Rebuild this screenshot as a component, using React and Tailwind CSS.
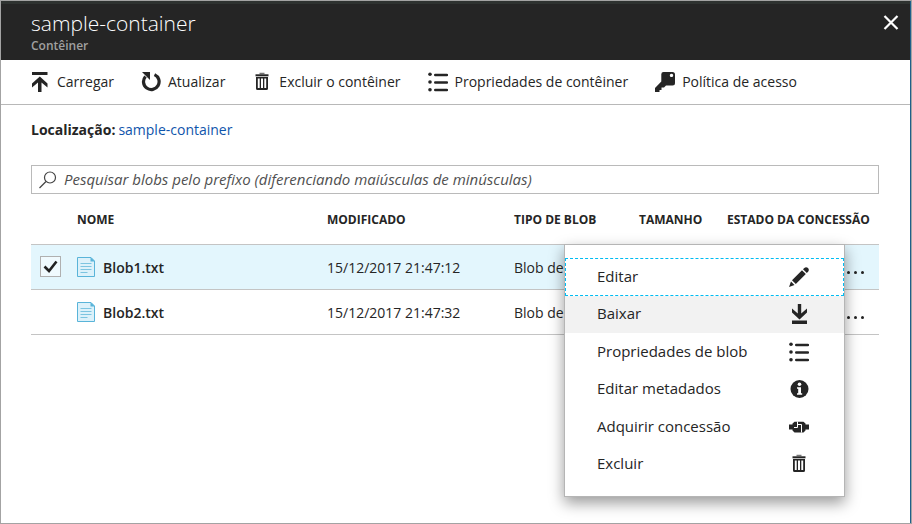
import React from "react";

function UploadIcon() {
  return (
    <svg width="20" height="20" viewBox="0 0 20 20" fill="currentColor" aria-hidden="true">
      <path d="M2 0h15.500v3H2z" />
      <path d="M9.800 4.500 17.500 11.500v4L11.500 10.500V20H8V10.500L2 15.500v-4z" />
    </svg>
  );
}

function DownloadIcon() {
  return (
    <svg width="20" height="20" viewBox="0 0 20 20" fill="currentColor" aria-hidden="true">
      <path d="M3 16.500h15v3.500H3z" />
      <path d="M10.500 15.500 18 8.500V4.500L12.200 9.500V0H8.800V9.500L3 4.500v4z" />
    </svg>
  );
}

function RefreshIcon() {
  return (
    <svg width="20" height="20" viewBox="0 0 20 20" fill="none" aria-hidden="true">
      <path d="M13.500 2.600A7.800 7.800 0 1 1 4.500 4.500" stroke="currentColor" strokeWidth="3.200" />
      <path d="M1 0H9v8z" fill="currentColor" />
    </svg>
  );
}

function TrashIcon() {
  return (
    <svg width="20" height="20" viewBox="0 0 20 20" fill="none" aria-hidden="true">
      <path d="M7.500 1.500h5" stroke="#777" strokeWidth="1.500" />
      <path d="M3.500 3.300h13" stroke="currentColor" strokeWidth="2" />
      <path
        fill="currentColor"
        fillRule="evenodd"
        d="M4 5h12V16.500q0 1.500-1.500 1.500h-9Q4 18 4 16.500zM5.800 6.500v9.500h1.900V6.500zm3.200 0v9.500h2V6.500zm3.300 0v9.500h1.900V6.500z"
      />
    </svg>
  );
}

function ListIcon() {
  return (
    <svg width="20" height="20" viewBox="0 0 20 20" aria-hidden="true">
      <g fill="currentColor">
        <circle cx="2" cy="2.300" r="1.800" />
        <circle cx="2" cy="10" r="1.800" />
        <circle cx="2" cy="17.700" r="1.800" />
      </g>
      <path d="M7.200 3H19M7.200 10.500H19M7.200 18H19" stroke="currentColor" strokeWidth="2.400" strokeLinecap="round" />
    </svg>
  );
}

function KeyIcon() {
  return (
    <svg width="20" height="20" viewBox="0 0 20 20" fill="currentColor" aria-hidden="true">
      <path
        fillRule="evenodd"
        d="M8.500 0H17.500Q20 0 20 2.500V11Q20 13.500 17.500 13.500H11L9 15.500H6.500V18H4.500V20H0V16L6.300 9.500V2.200Q6.300 0 8.500 0zM16.500 1.700a1.700 1.700 0 1 0 .01 0z"
      />
    </svg>
  );
}

function PencilIcon() {
  return (
    <svg width="20" height="20" viewBox="0 0 20 20" fill="currentColor" aria-hidden="true">
      <path d="M0 20 2 14.500 5.500 18z" />
      <path d="M3 13.200 13 3.200 16.800 7 6.800 17z" />
      <path d="M14 2.200 15.300.9Q17.200-.6 19 1.100 20.600 2.900 19.100 4.700L17.800 6z" />
    </svg>
  );
}

function InfoIcon() {
  return (
    <svg width="20" height="20" viewBox="0 0 20 20" aria-hidden="true">
      <circle cx="10.500" cy="10" r="9" fill="currentColor" />
      <circle cx="10.500" cy="5.200" r="1.800" fill="#fff" />
      <path d="M8 8.200h4v6h1.200v1.500H8v-1.500h1.200v-4.500H8z" fill="#fff" />
    </svg>
  );
}

function LeaseIcon() {
  return (
    <svg width="20" height="20" viewBox="0 0 20 20" aria-hidden="true">
      <path d="M0 7.500h3.500V6.500L5.500 4.800h9l2 1.700v1H20v5h-3.500v1L14.500 15.500h-9l-2-2v-1H0z" fill="currentColor" />
      <path d="M8.500 4.500V10.500H5M8.500 7.500H12.500V12.500M12.500 10.500V15.500" fill="none" stroke="#fff" strokeWidth="1" />
    </svg>
  );
}

function FileIcon() {
  return (
    <svg width="18" height="20" viewBox="0 0 18 20" aria-hidden="true">
      <path d="M.5.500H14L17.500 4V19.500H.5z" fill="#dcf1fa" stroke="#59b4d9" />
      <path d="M13.500 0 18 4.500H13.500z" fill="#59b4d9" />
      <path d="M3.500 6.500h11M3.500 9.500h11M3.500 12.500h11M3.500 15.500h7" stroke="#7cc4e0" />
    </svg>
  );
}

const commands = [
  { label: "Carregar", Icon: UploadIcon },
  { label: "Atualizar", Icon: RefreshIcon },
  { label: "Excluir o contêiner", Icon: TrashIcon },
  { label: "Propriedades de contêiner", Icon: ListIcon },
  { label: "Política de acesso", Icon: KeyIcon },
];

const blobs = [
  { name: "Blob1.txt", modified: "15/12/2017 21:47:12", type: "Blob de", selected: true },
  { name: "Blob2.txt", modified: "15/12/2017 21:47:32", type: "Blob de", selected: false },
];

const menuItems = [
  { label: "Editar", Icon: PencilIcon, look: "z-10 border-[#00bcf2] border-dashed" },
  { label: "Baixar", Icon: DownloadIcon, look: "border-[#f2f2f2] bg-[#f2f2f2]" },
  { label: "Propriedades de blob", Icon: ListIcon, look: "border-transparent" },
  { label: "Editar metadados", Icon: InfoIcon, look: "border-transparent" },
  { label: "Adquirir concessão", Icon: LeaseIcon, look: "border-transparent" },
  { label: "Excluir", Icon: TrashIcon, look: "border-transparent" },
];

function BlobRow({ blob }) {
  return (
    <tr className={`h-[45px] border-b border-[#c4c4c4] ${blob.selected ? "bg-[#e3f6fd]" : ""}`}>
      <td className="pl-[9px]">
        {blob.selected && (
          <label className="relative block size-[21px]">
            <input
              type="checkbox"
              defaultChecked
              aria-label={`Selecionar ${blob.name}`}
              className="block size-[21px] appearance-none border border-[#b0b0b0] bg-[#f0fafe]"
            />
            <svg className="pointer-events-none absolute inset-0" width="21" height="21" viewBox="0 0 21 21" aria-hidden="true">
              <path d="M4.500 10.500 9 15 16.500 5.500" fill="none" stroke="#222" strokeWidth="2.600" />
            </svg>
          </label>
        )}
      </td>
      <td>
        <div className="flex items-center gap-2">
          <FileIcon />
          <span className="pt-0.5 font-semibold">{blob.name}</span>
        </div>
      </td>
      <td className="pt-0.5">{blob.modified}</td>
      <td className="pt-0.5">{blob.type}</td>
      <td></td>
      <td className="pr-[15px]">
        <button type="button" aria-label={`Opções de ${blob.name}`} className="ml-auto flex gap-1 pt-3">
          <span className="size-[3px] rounded-full bg-[#222]" />
          <span className="size-[3px] rounded-full bg-[#222]" />
          <span className="size-[3px] rounded-full bg-[#222]" />
        </button>
      </td>
    </tr>
  );
}

export default function App() {
  return (
    <div className="flex min-h-screen flex-col border border-[#a3a3a3] bg-white font-['Open_Sans','Noto_Sans',sans-serif] text-[14px] leading-5 text-[#252525]">
      <div className="flex-1 border-r border-[#1f5f8b]">
        <header className="flex h-[59px] items-start justify-between border-t-3 border-[#2e3230] bg-[#252525] pr-[11px] pl-[30px]">
          <div className="pt-1">
            <h1 className="text-[21px] leading-[30px] font-light text-white">sample-container</h1>
            <p className="text-[12px] leading-4 font-semibold text-[#a0a0a0]">Contêiner</p>
          </div>
          <button type="button" aria-label="Fechar" className="mt-[11px] text-white">
            <svg width="16" height="16" viewBox="0 0 16 16" aria-hidden="true">
              <path d="M1.500 1 14.500 14M14.500 1 1.500 14" stroke="currentColor" strokeWidth="2.200" />
            </svg>
          </button>
        </header>

        <nav className="flex h-[45px] items-center gap-[27px] border-b border-[#b8b8b8] pl-[29px]">
          {commands.map(({ label, Icon }) => (
            <button key={label} type="button" className="flex items-center gap-[7px] whitespace-nowrap">
              <Icon />
              {label}
            </button>
          ))}
        </nav>

        <main className="pr-[31px] pl-[30px]">
          <p className="flex gap-[3px] pt-[15px]">
            <strong className="font-bold">Localização:</strong>
            <a href="#container" className="text-[#0f55ab]">sample-container</a>
          </p>

          <label className="mt-[25px] flex h-[29px] items-center gap-[7px] border border-[#bababa] pl-[7px]">
            <svg width="18" height="18" viewBox="0 0 18 18" fill="none" stroke="#444" strokeWidth="1.200" aria-hidden="true">
              <circle cx="11" cy="6.500" r="5.500" />
              <path d="M7 10.500.5 17" />
            </svg>
            <input
              type="text"
              aria-label="Pesquisar blobs"
              placeholder="Pesquisar blobs pelo prefixo (diferenciando maiúsculas de minúsculas)"
              className="min-w-0 flex-1 pb-0.5 text-[15px] italic outline-none placeholder:text-[#505050]"
            />
          </label>

          <div className="relative">
            <table className="w-full table-fixed border-collapse text-left">
              <colgroup>
                <col className="w-[46px]" />
                <col />
                <col className="w-[187px]" />
                <col className="w-[125px]" />
                <col className="w-[88px]" />
                <col className="w-[152px]" />
              </colgroup>
              <thead>
                <tr className="h-[50px] border-b border-[#c4c4c4] text-[12px] whitespace-nowrap *:pt-0.5 *:font-bold">
                  <th></th>
                  <th>NOME</th>
                  <th>MODIFICADO</th>
                  <th>TIPO DE BLOB</th>
                  <th>TAMANHO</th>
                  <th>ESTADO DA CONCESSÃO</th>
                </tr>
              </thead>
              <tbody>
                {blobs.map((blob) => (
                  <BlobRow key={blob.name} blob={blob} />
                ))}
              </tbody>
            </table>

            <div
              role="menu"
              className="absolute top-[50px] right-[34px] grid h-[253px] w-[281px] auto-rows-fr border border-[#b5b5b5] bg-white py-[13px] text-[15px] shadow-[0_6px_14px_rgba(0,0,0,0.4)]"
            >
              {menuItems.map(({ label, Icon, look }) => (
                <button
                  key={label}
                  type="button"
                  role="menuitem"
                  className={`flex items-center justify-between border pr-[34px] pl-[31px] ${look}`}
                >
                  <span className="pb-0.5">{label}</span>
                  <Icon />
                </button>
              ))}
            </div>
          </div>
        </main>
      </div>
    </div>
  );
}
